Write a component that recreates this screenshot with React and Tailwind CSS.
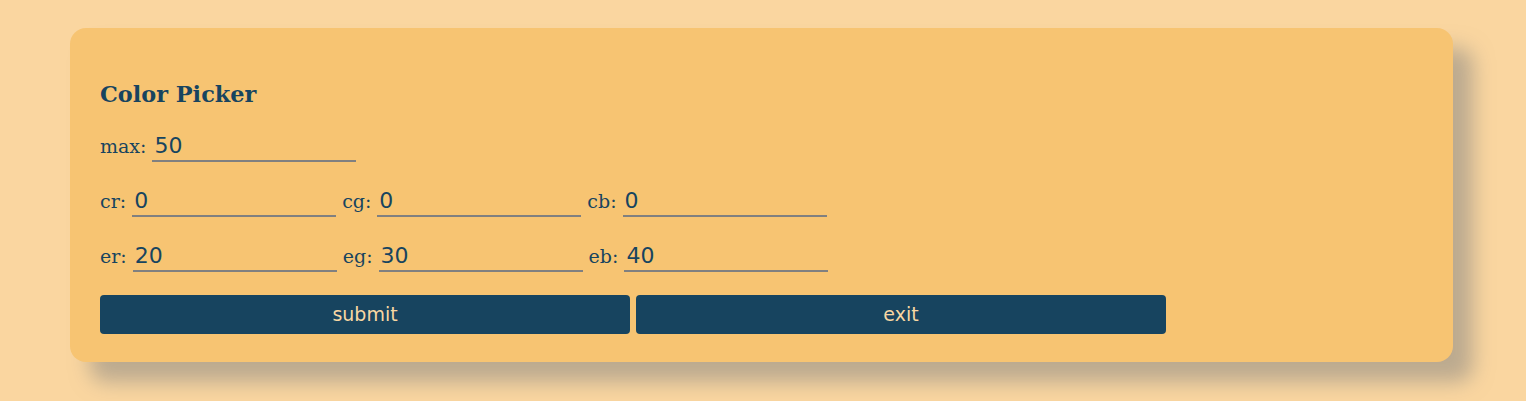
import React, { useState } from 'react';

const serif = { fontFamily: '"DejaVu Serif", serif' };

function Field({ label, value, onChange }) {
  return (
    <div className="flex items-baseline gap-[6px]">
      <label className="text-[19px] leading-[20px] text-[#17445f]" style={serif}>{label}:</label>
      <input
        type="text"
        value={value}
        onChange={(e) => onChange(e.target.value)}
        className="w-[204px] h-[29px] px-[2px] pb-[2px] bg-transparent border-0 border-b-2 border-[#808080] outline-none text-[22px] leading-[26px] text-[#17445f] font-['DejaVu_Sans',sans-serif]"
      />
    </div>
  );
}

export default function App() {
  const [vals, setVals] = useState({ max: '50', cr: '0', cg: '0', cb: '0', er: '20', eg: '30', eb: '40' });
  const set = (k) => (v) => setVals({ ...vals, [k]: v });

  return (
    <div className="min-h-[401px] bg-[#fad6a0] pt-[28px] pl-[70px] pr-[73px] pb-[39px]">
      <div className="w-[1383px] h-[334px] rounded-[16px] bg-[#f7c472] shadow-[20px_20px_20px_rgba(128,128,128,0.5)] px-[30px] pt-[51px] pb-[28px] flex flex-col">
        <h2 className="text-[22.4px] leading-[30px] font-bold text-[#17445f]" style={serif}>Color Picker</h2>

        <div className="mt-[24px] flex">
          <Field label="max" value={vals.max} onChange={set('max')} />
        </div>

        <div className="mt-[26px] flex gap-[6px]">
          <Field label="cr" value={vals.cr} onChange={set('cr')} />
          <Field label="cg" value={vals.cg} onChange={set('cg')} />
          <Field label="cb" value={vals.cb} onChange={set('cb')} />
        </div>

        <div className="mt-[26px] flex gap-[6px]">
          <Field label="er" value={vals.er} onChange={set('er')} />
          <Field label="eg" value={vals.eg} onChange={set('eg')} />
          <Field label="eb" value={vals.eb} onChange={set('eb')} />
        </div>

        <div className="mt-[23px] flex gap-[6px]">
          <button className="w-[530px] h-[39px] rounded-[4px] bg-[#17445f] text-[#f7d7a3] text-[19px] font-['DejaVu_Sans',sans-serif]">submit</button>
          <button className="w-[530px] h-[39px] rounded-[4px] bg-[#17445f] text-[#f7d7a3] text-[19px] font-['DejaVu_Sans',sans-serif]">exit</button>
        </div>
      </div>
    </div>
  );
}
